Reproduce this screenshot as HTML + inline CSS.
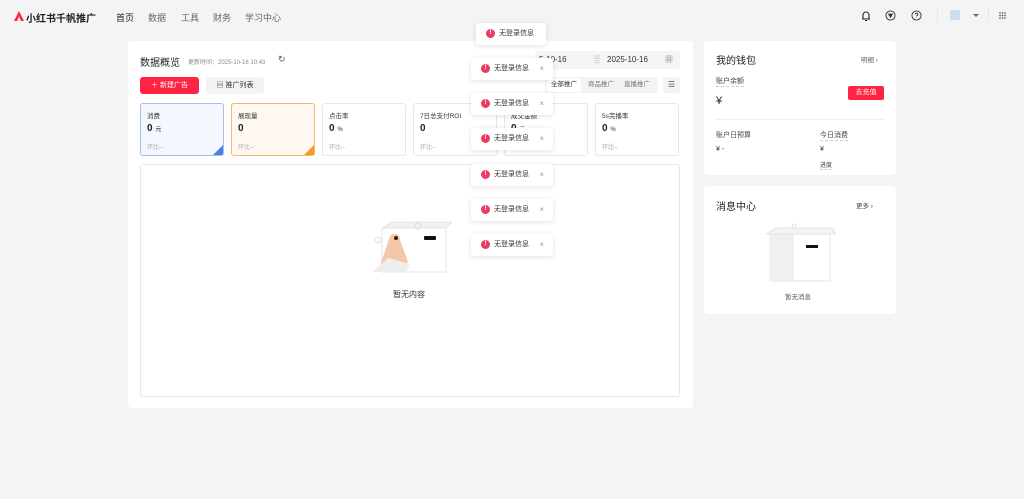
<!DOCTYPE html>
<html><head><meta charset="utf-8"><style>
*{box-sizing:border-box;margin:0;padding:0}
body{width:1024px;height:499px;background:#f4f4f4;font-family:"Liberation Sans","Noto Sans CJK SC",sans-serif;color:#333;position:relative;overflow:hidden;font-size:8px}
.a{position:absolute}
.card{position:absolute;background:#fff;border-radius:4px}
.nav span{position:absolute;top:11px;font-size:9px;color:#666}
.m{position:absolute;top:103px;width:84px;height:53px;border:1px solid #e8e8e8;border-radius:3px;background:#fff;overflow:hidden}
.m .t{position:absolute;left:6px;top:6px;font-size:6.5px;color:#333}
.m .v{position:absolute;left:6px;top:19px;font-size:10px;font-weight:bold;color:#222}
.m .v small{font-size:6px;font-weight:normal}
.m .h{position:absolute;left:6px;top:38px;font-size:6px;color:#aaa}
.toast{position:absolute;height:22px;background:#fff;border-radius:3px;box-shadow:0 1px 6px rgba(0,0,0,.12);font-size:7px;color:#333;line-height:22px;padding-left:23px}
.toast:before{content:"!";position:absolute;left:10px;top:6px;width:9px;height:9px;border-radius:50%;background:#ee3a60;color:#fff;font-size:6px;line-height:9px;text-align:center;font-weight:bold}
.toast i{position:absolute;right:9px;top:0;font-style:normal;color:#999;font-size:8px}
</style></head><body>
<svg class="a" style="left:14px;top:11px" width="10" height="10" viewBox="0 0 10 10"><path d="M5 0L10 10H7L5 5.5 3 10H0z" fill="#ff2442"/></svg>
<div class="a" style="left:26px;top:10px;font-size:10px;font-weight:bold;color:#222">小红书千帆推广</div>
<div class="nav"><span style="left:116px;color:#222">首页</span><span style="left:148px">数据</span><span style="left:181px">工具</span><span style="left:213px">财务</span><span style="left:245px">学习中心</span></div>
<svg class="a" style="left:860px;top:10px" width="12" height="12" viewBox="0 0 12 12" fill="none" stroke="#222" stroke-width="1.1"><path d="M3 9V5a3 3 0 016 0v4zM2 9h8M5 10.5h2"/></svg>
<svg class="a" style="left:885px;top:10px" width="11" height="11" viewBox="0 0 12 12" fill="none" stroke="#333" stroke-width="1"><circle cx="6" cy="6" r="5"/><path d="M4 4.5h4L6 8z" fill="#333"/></svg>
<svg class="a" style="left:911px;top:10px" width="11" height="11" viewBox="0 0 12 12" fill="none" stroke="#333" stroke-width="1"><circle cx="6" cy="6" r="5"/><path d="M4.5 4.8a1.5 1.5 0 113 .2c0 1-1.5 1-1.5 2M6 8.5v.5"/></svg>
<div class="a" style="left:937px;top:8px;width:1px;height:14px;background:#e5e5e5"></div>
<div class="a" style="left:950px;top:10px;width:10px;height:10px;background:#cde;border-radius:2px"></div>
<div class="a" style="left:973px;top:14px;border:3px solid transparent;border-top:3px solid #666"></div>
<div class="a" style="left:988px;top:8px;width:1px;height:14px;background:#e5e5e5"></div>
<svg class="a" style="left:999px;top:12px" width="7" height="7" viewBox="0 0 7 7" fill="#444"><circle cx="1" cy="1" r=".8"/><circle cx="3.5" cy="1" r=".8"/><circle cx="6" cy="1" r=".8"/><circle cx="1" cy="3.5" r=".8"/><circle cx="3.5" cy="3.5" r=".8"/><circle cx="6" cy="3.5" r=".8"/><circle cx="1" cy="6" r=".8"/><circle cx="3.5" cy="6" r=".8"/><circle cx="6" cy="6" r=".8"/></svg>

<div class="card" style="left:128px;top:41px;width:565px;height:367px"></div>
<div class="a" style="left:140px;top:54px;font-size:10px;color:#222">数据概览</div>
<div class="a" style="left:188px;top:57px;font-size:6px;color:#888">更新时间：2025-10-16 10:43</div>
<div class="a" style="left:278px;top:54px;font-size:9px;color:#555">↻</div>
<div class="a" style="left:140px;top:77px;width:59px;height:17px;background:#ff2442;border-radius:3px;color:#fff;font-size:7px;line-height:17px;text-align:center">＋ 新建广告</div>
<div class="a" style="left:206px;top:77px;width:58px;height:17px;background:#f3f3f3;border-radius:3px;color:#333;font-size:7px;line-height:17px;text-align:center">▤ 推广列表</div>
<div class="a" style="left:535px;top:51px;width:145px;height:18px;background:#f5f5f5;border-radius:3px;font-size:8px;color:#333;line-height:18px"><span style="position:absolute;left:4px">5-10-16</span><span style="position:absolute;left:58px;color:#ccc">至</span><span style="position:absolute;left:72px">2025-10-16</span><span style="position:absolute;left:130px;color:#777">▦</span></div>
<div class="a" style="left:545px;top:77px;width:113px;height:16px;background:#f3f3f3;border-radius:3px;font-size:6.5px;line-height:16px;color:#777"><span style="position:absolute;left:2px;top:1px;height:14px;line-height:14px;background:#fff;padding:0 4px;color:#333">全部推广</span><span style="position:absolute;left:43px">商品推广</span><span style="position:absolute;left:79px">直播推广</span></div>
<div class="a" style="left:663px;top:77px;width:17px;height:16px;background:#f3f3f3;border-radius:3px;font-size:8px;line-height:16px;text-align:center;color:#555">☰</div>

<div class="m" style="left:140px;background:#f4f8fe;border-color:#a9bde6"><div class="t">消费</div><div class="v">0 <small>元</small></div><div class="h">环比--</div><div class="a" style="right:0;bottom:0;border:5px solid transparent;border-right-color:#4d7ee8;border-bottom-color:#4d7ee8"></div></div>
<div class="m" style="left:231px;background:#fef8f1;border-color:#f0b870"><div class="t">展现量</div><div class="v">0</div><div class="h">环比--</div><div class="a" style="right:0;bottom:0;border:5px solid transparent;border-right-color:#f39a2b;border-bottom-color:#f39a2b"></div></div>
<div class="m" style="left:322px"><div class="t">点击率</div><div class="v">0 <small>%</small></div><div class="h">环比--</div></div>
<div class="m" style="left:413px"><div class="t">7日总支付ROI</div><div class="v">0</div><div class="h">环比--</div></div>
<div class="m" style="left:504px"><div class="t">成交金额</div><div class="v">0 <small>元</small></div><div class="h">环比--</div></div>
<div class="m" style="left:595px"><div class="t">5s完播率</div><div class="v">0 <small>%</small></div><div class="h">环比--</div></div>

<div class="a" style="left:140px;top:164px;width:540px;height:233px;border:1px solid #e8e8e8;border-radius:3px"></div>
<svg class="a" style="left:368px;top:218px" width="84" height="56" viewBox="0 0 84 56"><rect x="14" y="10" width="64" height="44" fill="#fff" stroke="#e5e5e5"/><path d="M14 10l10-6h60l-6 6z" fill="#f0f0f0" stroke="#e5e5e5"/><rect x="56" y="18" width="12" height="4" rx="1" fill="#111"/><path d="M22 18c4-4 10-2 10 4l8 22-12 8-16-4z" fill="#f4c7a8"/><path d="M20 40l22 6-4 8H4z" fill="#eee"/><circle cx="28" cy="20" r="2" fill="#222"/><circle cx="10" cy="22" r="3" fill="none" stroke="#ddd"/><circle cx="50" cy="8" r="3" fill="none" stroke="#ddd"/></svg>
<div class="a" style="left:393px;top:289px;font-size:8px;color:#333">暂无内容</div>

<div class="card" style="left:704px;top:41px;width:192px;height:134px"></div>
<div class="a" style="left:716px;top:52px;font-size:10px;color:#222">我的钱包</div>
<div class="a" style="left:861px;top:54px;font-size:6.5px;color:#666">明细 ›</div>
<div class="a" style="left:716px;top:76px;font-size:7px;color:#444;border-bottom:1px dashed #ccc">账户余额</div>
<div class="a" style="left:716px;top:95px;font-size:11px;color:#222">¥</div>
<div class="a" style="left:848px;top:86px;width:36px;height:14px;background:#ff2442;color:#fff;font-size:7px;line-height:14px;text-align:center;border-radius:2px">去充值</div>
<div class="a" style="left:716px;top:119px;width:168px;height:1px;background:#eee"></div>
<div class="a" style="left:716px;top:130px;font-size:7px;color:#444">账户日预算</div>
<div class="a" style="left:716px;top:146px;font-size:7px;color:#333">¥ -</div>
<div class="a" style="left:820px;top:130px;font-size:7px;color:#444;border-bottom:1px dashed #ccc">今日消费</div>
<div class="a" style="left:820px;top:146px;font-size:7px;color:#333">¥</div>
<div class="a" style="left:820px;top:160px;font-size:6px;color:#444;border-bottom:1px dashed #ccc">进度</div>

<div class="card" style="left:704px;top:186px;width:192px;height:128px"></div>
<div class="a" style="left:716px;top:198px;font-size:10px;color:#222">消息中心</div>
<div class="a" style="left:856px;top:200px;font-size:6.5px;color:#444">更多 ›</div>
<svg class="a" style="left:764px;top:220px" width="72" height="62" viewBox="0 0 72 62"><rect x="6" y="14" width="60" height="47" fill="#fff" stroke="#e5e5e5"/><rect x="6" y="14" width="24" height="47" fill="#f0f0f0"/><path d="M2 14l10-6h56l4 6z" fill="#f3f3f3" stroke="#e5e5e5"/><rect x="42" y="25" width="12" height="3" fill="#111"/><circle cx="30" cy="6" r="2" fill="none" stroke="#ddd"/></svg>
<div class="a" style="left:785px;top:291px;font-size:6.5px;color:#555">暂无消息</div>

<div class="toast" style="left:476px;top:23px;width:70px">无登录信息</div>
<div class="toast" style="left:471px;top:58px;width:82px">无登录信息<i>×</i></div>
<div class="toast" style="left:471px;top:93px;width:82px">无登录信息<i>×</i></div>
<div class="toast" style="left:471px;top:128px;width:82px">无登录信息<i>×</i></div>
<div class="toast" style="left:471px;top:164px;width:82px">无登录信息<i>×</i></div>
<div class="toast" style="left:471px;top:199px;width:82px">无登录信息<i>×</i></div>
<div class="toast" style="left:471px;top:234px;width:82px">无登录信息<i>×</i></div>
</body></html>
